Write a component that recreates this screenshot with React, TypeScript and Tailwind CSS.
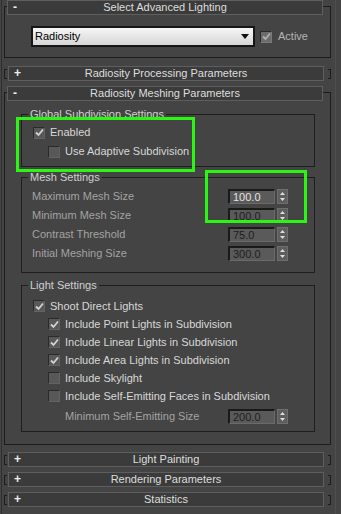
import React from "react";

const FONT = { fontFamily: '"Liberation Sans", Arial, sans-serif' };

function Header(props: { title: string; open?: boolean }) {
  return (
    <div className="h-[15px] w-[316px] bg-[#3b3b3b] border border-[#5e5e5e] relative flex items-center justify-center text-[11px] leading-[13px] text-[#dedede]">
      <span className="absolute left-[5px] top-[0px] text-[12px] font-bold text-[#eeeeee]">
        {props.open ? "-" : "+"}
      </span>
      {props.title}
    </div>
  );
}

function Collapsed(props: { title: string; className?: string }) {
  return (
    <div className={"flex items-center w-[327px] " + (props.className ?? "")}>
      <div className="w-[3px] h-[10px] border-l border-t border-b border-[#1c1c1c]" />
      <div className="ml-[1px]">
        <Header title={props.title} />
      </div>
      <div className="ml-[4px] w-[3px] h-[10px] border-r border-t border-b border-[#1c1c1c]" />
    </div>
  );
}

function Check(props: { checked?: boolean; dim?: boolean }) {
  return (
    <div
      className={
        "w-[12px] h-[12px] shrink-0 border-t border-l border-[#2a2a2a] border-b border-r flex items-center justify-center " +
        (props.dim ? "bg-[#6c6c6c] border-b-[#7a7a7a] border-r-[#7a7a7a]" : "bg-[#585858] border-b-[#636363] border-r-[#636363]")
      }
    >
      {props.checked && (
        <svg width="9" height="9" viewBox="0 0 9 9">
          <path
            d="M1 4.5 L3.5 7 L8 1.5"
            fill="none"
            stroke={props.dim ? "#b0b0b0" : "#d4d4d4"}
            strokeWidth="1.8"
          />
        </svg>
      )}
    </div>
  );
}

function CheckRow(props: { label: string; checked?: boolean; sub?: boolean }) {
  return (
    <div className={"h-[18px] flex items-center " + (props.sub ? "pl-[26px]" : "pl-[11px]")}>
      <Check checked={props.checked} />
      <span className="ml-[5px] text-[11px] text-[#d8d8d8] whitespace-nowrap">{props.label}</span>
    </div>
  );
}

function Spinner(props: { value: string; bright?: boolean }) {
  return (
    <div className="flex items-center">
      <div
        className={
          "w-[47px] h-[15px] bg-[#5a5a5a] border-t-2 border-l-2 border-[#1a1a1a] border-b border-r border-b-[#6a6a6a] border-r-[#6a6a6a] pl-[3px] text-[11px] leading-[12px] flex items-center " +
          (props.bright ? "text-[#e2e2e2]" : "text-[#1e1e1e]")
        }
      >
        {props.value}
      </div>
      <div className="ml-[2px] w-[11px] h-[15px] bg-[#5e5e5e] border border-[#6e6e6e] flex flex-col items-center justify-center gap-[3px]">
        <svg width="5" height="3" viewBox="0 0 5 3">
          <path d="M0 3 L2.5 0 L5 3 Z" fill="#dddddd" />
        </svg>
        <svg width="5" height="3" viewBox="0 0 5 3">
          <path d="M0 0 L2.5 3 L5 0 Z" fill="#dddddd" />
        </svg>
      </div>
    </div>
  );
}

function ValueRow(props: { label: string; value: string; bright?: boolean; className?: string }) {
  return (
    <div className={"h-[19px] flex items-center pl-[10px] pr-[26px] " + (props.className ?? "")}>
      <span className="flex-1 text-[11px] text-[#a3a3a3] whitespace-nowrap">{props.label}</span>
      <Spinner value={props.value} bright={props.bright} />
    </div>
  );
}

function Group(props: { label: string; className?: string; children: React.ReactNode }) {
  return (
    <div className={"ml-[16px] mr-[15px] border border-[#1e1e1e] " + (props.className ?? "")}>
      <span className="block w-fit -mt-[7px] ml-[6px] px-[2px] bg-[#444444] text-[11px] leading-[13px] text-[#d0d0d0] whitespace-nowrap">
        {props.label}
      </span>
      {props.children}
    </div>
  );
}

export default function App() {
  return (
    <div className="w-[341px] h-[514px] bg-[#444444] overflow-hidden relative flex" style={FONT}>
      <div className="w-[1px] shrink-0" />
      <div className="w-[1px] shrink-0 bg-[#2f2f2f]" />
      <div className="pl-[2px] w-[331px] shrink-0 flex flex-col">
        {/* Select Advanced Lighting */}
        <div className="mt-[6px] border border-[#1c1c1c] w-[327px] pb-[10px]">
          <div className="-mt-[7px] ml-[2px]">
            <Header title="Select Advanced Lighting" open />
          </div>
          <div className="mt-[11px] ml-[26px] flex items-center">
            <div className="w-[224px] h-[21px] border-2 border-[#161616] bg-gradient-to-b from-[#f6f6f6] to-[#d6d6d6] flex items-center pl-[2px] pr-[4px]">
              <span className="flex-1 text-[11px] text-[#000000]">Radiosity</span>
              <svg width="8" height="5" viewBox="0 0 8 5">
                <path d="M0 0 L8 0 L4 5 Z" fill="#111111" />
              </svg>
            </div>
            <div className="ml-[5px]">
              <Check checked dim />
            </div>
            <span className="ml-[6px] text-[11px] text-[#b4b4b4]">Active</span>
          </div>
        </div>

        <Collapsed title="Radiosity Processing Parameters" className="mt-[8px]" />

        {/* Radiosity Meshing Parameters */}
        <div className="mt-[11px] border border-[#1c1c1c] w-[327px] pb-[12px]">
          <div className="-mt-[7px] ml-[2px]">
            <Header title="Radiosity Meshing Parameters" open />
          </div>

          <Group label="Global Subdivision Settings" className="mt-[13px] pb-[5px]">
            <div className="mt-[2px]">
              <div className="h-[19px] flex items-center pl-[11px]">
                <Check checked />
                <span className="ml-[5px] text-[11px] text-[#d8d8d8]">Enabled</span>
              </div>
              <div className="h-[19px] flex items-center pl-[26px]">
                <Check />
                <span className="ml-[5px] text-[11px] text-[#d8d8d8]">Use Adaptive Subdivision</span>
              </div>
            </div>
          </Group>

          <Group label="Mesh Settings" className="mt-[10px] pb-[9px]">
            <div className="mt-[3px]">
              <ValueRow label="Maximum Mesh Size" value="100.0" bright />
              <ValueRow label="Minimum Mesh Size" value="100.0" />
              <ValueRow label="Contrast Threshold" value="75.0" />
              <ValueRow label="Initial Meshing Size" value="300.0" />
            </div>
          </Group>

          <Group label="Light Settings" className="mt-[12px] pb-[5px]">
            <div className="mt-[5px]">
              <CheckRow label="Shoot Direct Lights" checked />
              <CheckRow label="Include Point Lights in Subdivision" checked sub />
              <CheckRow label="Include Linear Lights in Subdivision" checked sub />
              <CheckRow label="Include Area Lights in Subdivision" checked sub />
              <CheckRow label="Include Skylight" sub />
              <CheckRow label="Include Self-Emitting Faces in Subdivision" sub />
              <ValueRow
                label="Minimum Self-Emitting Size"
                value="200.0"
                className="mt-[2px] !pl-[43px]"
              />
            </div>
          </Group>
        </div>

        <Collapsed title="Light Painting" className="mt-[7px]" />
        <Collapsed title="Rendering Parameters" className="mt-[5px]" />
        <Collapsed title="Statistics" className="mt-[5px]" />
      </div>
      <div className="ml-[2px] w-[1px] shrink-0 bg-[#4e4e4e]" />

      {/* annotation highlights */}
      <div className="absolute left-[16px] top-[117px] w-[179px] h-[55px] border-[3px] border-[#2bf513] pointer-events-none" />
      <div className="absolute left-[205px] top-[170px] w-[102px] h-[53px] border-[3px] border-[#2bf513] pointer-events-none" />
    </div>
  );
}
